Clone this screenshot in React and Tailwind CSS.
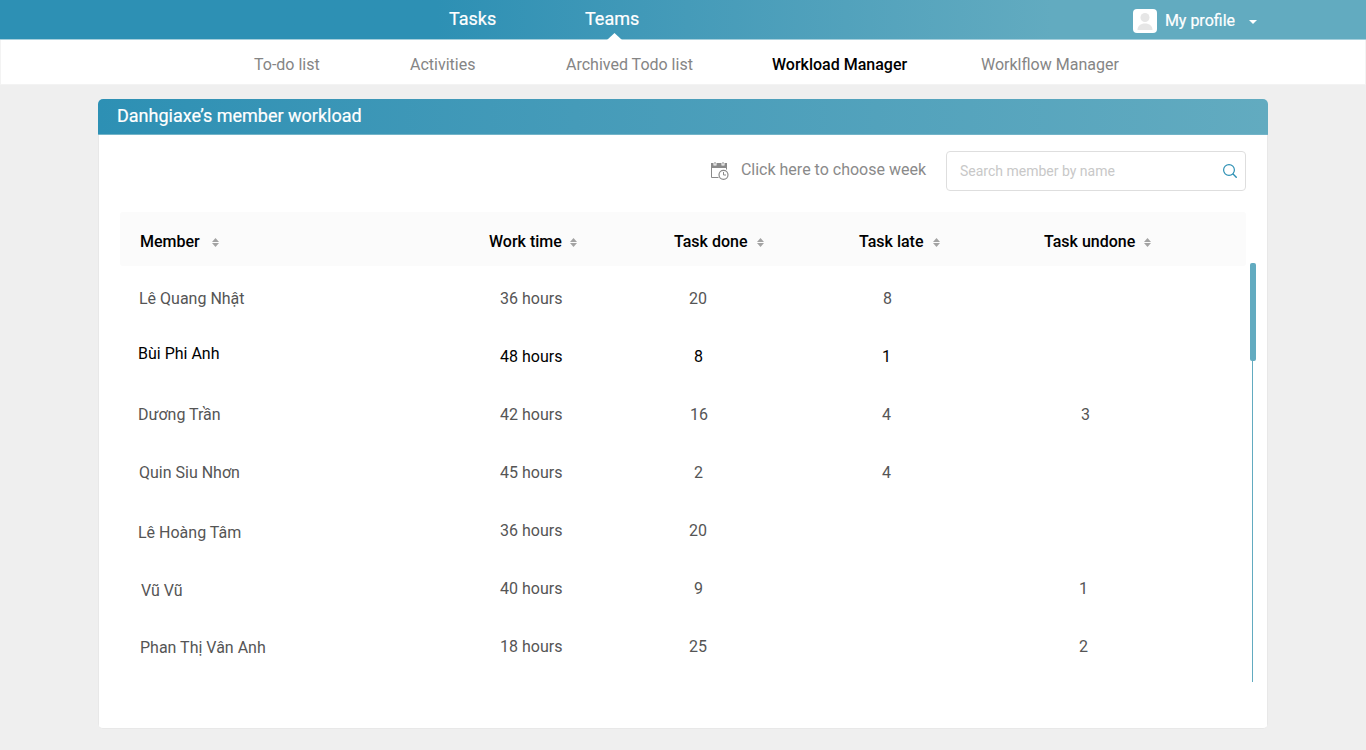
const nav = [
  { label: 'To-do list', place: 'w-[156px]' },
  { label: 'Activities', place: 'w-[156px]' },
  { label: 'Archived Todo list', place: 'w-[206px]' },
  { label: 'Workload Manager', place: 'w-[209px]', active: true },
  { label: 'Worklflow Manager', place: '' },
];

const columns = [
  { label: 'Member', gap: 'gap-[12px]' },
  { label: 'Work time', gap: 'gap-[8px]' },
  { label: 'Task done', gap: 'gap-[9.500px]' },
  { label: 'Task late', gap: 'gap-[9px]' },
  { label: 'Task undone', gap: 'gap-[9px]' },
];

const rows = [
  { name: 'Lê Quang Nhật', shift: 'pl-[19px]', time: '36 hours', done: '20', late: '8', undone: '' },
  { name: 'Bùi Phi Anh', shift: 'pl-[18px] pb-[6px]', time: '48 hours', done: '8', late: '1', undone: '', active: true },
  { name: 'Dương Trần', shift: 'pl-[18px]', time: '42 hours', done: '16', late: '4', undone: '3' },
  { name: 'Quin Siu Nhơn', shift: 'pl-[19px]', time: '45 hours', done: '2', late: '4', undone: '' },
  { name: 'Lê Hoàng Tâm', shift: 'pl-[18px] pt-[4px]', time: '36 hours', done: '20', late: '', undone: '' },
  { name: 'Vũ Vũ', shift: 'pl-[21px] pt-[4px]', time: '40 hours', done: '9', late: '', undone: '1' },
  { name: 'Phan Thị Vân Anh', shift: 'pl-[20px] pt-[2px]', time: '18 hours', done: '25', late: '', undone: '2' },
];

// Slight optical nudges for individual figures
const doneNudges = { '16': 'pl-[2px]', '20': '', '25': '' };
const undoneNudges = { '3': 'pl-[3px]', '1': 'pr-[1px]', '2': 'pr-[1px]' };

function SortIcon() {
  return (
    <svg className="mt-[2px] h-[9px] w-[7px] shrink-0" viewBox="0 0 7 9" fill="#a3a3a3">
      <path d="M3.500 0 7 4H0zM3.500 9 0 5h7z" />
    </svg>
  );
}

function CalendarClockIcon() {
  return (
    <svg className="h-[18px] w-[18px]" viewBox="0 0 18 18" fill="none" stroke="#8a8a8a">
      <path d="M0 1h2.500v2.500h3V1h5v2.500h3V1H16v5H0z" fill="#8a8a8a" stroke="none" />
      <path d="M4 0v2.500M12 0v2.500" />
      <path d="M.5 5v10.500h7M15.500 5v2.500" />
      <circle cx="12.500" cy="12.800" r="4.500" strokeWidth="1.200" />
      <path d="M12.500 10v3H15" />
    </svg>
  );
}

export default function App() {
  return (
    <div className="h-[750px] w-[1366px] overflow-hidden bg-[#efefef] font-['Roboto',sans-serif] text-base text-[#555]">
      <header className="flex h-10 border-b border-[#a6cfdc] bg-linear-to-r from-[#2d90b4] from-32% to-[#62abc0] to-77% pl-[449px] text-lg text-white [-webkit-text-stroke:0.2px_white]">
        <a className="w-[136px] leading-[38px]">Tasks</a>
        <a className="relative w-[60px] leading-[38px]">
          Teams
          <svg className="absolute top-[33px] left-[22px] h-[7px] w-[15px]" viewBox="0 0 15 7" fill="#fff">
            <path d="M7.500 0 15 7H0z" />
          </svg>
        </a>
        <div className="ml-auto flex items-center pr-[109px] text-base">
          <svg className="mt-[3px] h-6 w-6" viewBox="0 0 24 24">
            <rect width="24" height="24" rx="4" fill="#fff" />
            <circle cx="12" cy="8.500" r="4.500" fill="#e6e6e6" />
            <path d="M4.500 21c0-4 3-6.500 7.500-6.500s7.500 2.500 7.500 6.500z" fill="#e6e6e6" />
          </svg>
          <span className="mt-[2px] ml-2">My profile</span>
          <svg className="mt-[5px] ml-[14px] h-1 w-2" viewBox="0 0 8 4" fill="#fff">
            <path d="M0 0h8L4 4z" />
          </svg>
        </div>
      </header>
      <nav className="flex h-[45px] border border-t-0 border-[#f3f3f3] bg-white pl-[253px] leading-[49px] text-[#858585]">
        {nav.map((item) => (
          <a key={item.label} className={`${item.place} ${item.active ? 'font-medium text-black' : ''}`}>
            {item.label}
          </a>
        ))}
      </nav>
      <main className="mx-[98px] mt-[14px] flex h-[630px] flex-col overflow-hidden rounded-[5px] border-b border-[#e8e8e8] bg-white">
        <h1 className="h-9 shrink-0 border-b border-[#73b4c8] bg-linear-to-r from-[#2d90b4] to-[#62abc0] pl-[19px] text-lg leading-[34px] text-white [-webkit-text-stroke:0.2px_white]">
          Danhgiaxe’s member workload
        </h1>
        <div className="flex grow flex-col border-x border-[#e8e8e8] pl-[21px]">
          <div className="mt-4 flex h-10 items-center justify-end pr-[21px]">
            <CalendarClockIcon />
            <span className="mr-5 mb-[3px] ml-3 text-[#8a8a8a]">Click here to choose week</span>
            <label className="flex h-10 w-[300px] items-center justify-between rounded border border-[#dedede] pr-2 pl-[13px] text-sm text-[#c8c8c8]">
              Search member by name
              <svg className="h-[14px] w-[14px]" viewBox="0 0 14 14" fill="none" stroke="#2d90b4" strokeWidth="1.200">
                <circle cx="6" cy="6" r="5.400" />
                <path d="m9.800 9.800 3.900 3.900" strokeWidth="1.400" />
              </svg>
            </label>
          </div>
          <div className="mt-[21px] grid h-[54px] w-[1126px] grid-cols-[349px_185px_185px_185px_1fr] items-center rounded-[3px] bg-[#fbfbfb] pt-[5px] pl-5 font-medium text-black">
            {columns.map((column) => (
              <div key={column.label} className={`flex items-center whitespace-nowrap ${column.gap}`}>
                {column.label}
                <SortIcon />
              </div>
            ))}
          </div>
          <div className="flex">
            <div className="w-[1126px] pt-[4px]">
              {rows.map((row) => (
                <div
                  key={row.name}
                  className={`grid h-[58px] grid-cols-[380px_156px_84px_104px_84px_114px_84px] items-center ${row.active ? 'text-black' : ''}`}
                >
                  <span className={row.shift}>{row.name}</span>
                  <span>{row.time}</span>
                  <span className={`text-center ${doneNudges[row.done] ?? 'pl-px'}`}>{row.done}</span>
                  <span />
                  <span className={`text-center ${row.late === '8' ? 'pl-[3px]' : 'pl-px'}`}>{row.late}</span>
                  <span />
                  <span className={`text-center ${undoneNudges[row.undone] ?? ''}`}>{row.undone}</span>
                </div>
              ))}
            </div>
            <div className="-mt-[3px] ml-1 flex h-[419px] w-[6px] flex-col items-center">
              <div className="h-[98px] w-[6px] shrink-0 rounded-[2px] bg-[#62abc0]" />
              <div className="mr-px w-px grow bg-[#62abc0]" />
            </div>
          </div>
        </div>
      </main>
    </div>
  );
}
